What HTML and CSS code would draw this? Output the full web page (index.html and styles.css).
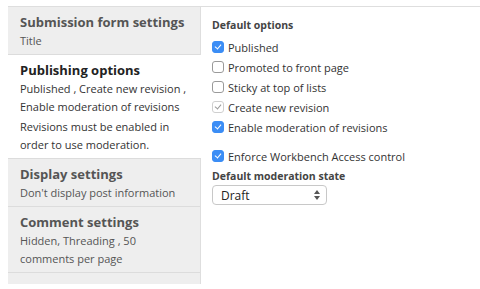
FILE: index.html
```html
<!DOCTYPE html>
<html lang="en">
<head>
  <meta charset="UTF-8">
  <meta name="viewport" content="width=device-width, initial-scale=1.0">
  <title>Publishing options</title>
  <link rel="stylesheet" href="styles.css">
</head>
<body>
  <div class="vtabs">
    <ul class="menu">
      <li class="tab">
        <div class="tab-title">Submission form settings</div>
        <div class="tab-summary">Title</div>
      </li>
      <li class="tab active">
        <div class="tab-title">Publishing options</div>
        <div class="tab-summary">Published , Create new revision , Enable moderation of revisions</div>
        <div class="tab-summary note">Revisions must be enabled in order to use moderation.</div>
      </li>
      <li class="tab">
        <div class="tab-title">Display settings</div>
        <div class="tab-summary">Don't display post information</div>
      </li>
      <li class="tab">
        <div class="tab-title">Comment settings</div>
        <div class="tab-summary">Hidden, Threading , 50 comments per page</div>
      </li>
    </ul>

    <div class="panel">
      <div class="label">Default options</div>
      <div class="options">
        <label class="check"><span class="box checked"></span>Published</label>
        <label class="check"><span class="box"></span>Promoted to front page</label>
        <label class="check"><span class="box"></span>Sticky at top of lists</label>
        <label class="check"><span class="box checked disabled"></span>Create new revision</label>
        <label class="check"><span class="box checked"></span>Enable moderation of revisions</label>
      </div>

      <label class="check enforce"><span class="box checked"></span>Enforce Workbench Access control</label>

      <div class="label state">Default moderation state</div>
      <div class="select">
        <span>Draft</span>
        <svg class="arrows" width="6" height="10" viewBox="0 0 6 10">
          <path d="M0 4 L3 0 L6 4 Z M0 6 L3 10 L6 6 Z" fill="#555"/>
        </svg>
      </div>
    </div>
  </div>
</body>
</html>
```

FILE: styles.css
```css
body {
  margin: 0;
  font-family: 'Open Sans', sans-serif;
  font-size: 11px;
  color: #333;
  background: #fff;
}

.vtabs {
  display: flex;
  margin: 6px 0 0 8px;
  height: 277px;
  border-top: 1px solid #dedede;
}

.menu {
  list-style: none;
  margin: 0;
  padding: 0;
  width: 192px;
  flex-shrink: 0;
  background: #eeeeee;
}

.tab {
  padding: 6px 12px 4px;
  border-bottom: 1px solid #dcdcdc;
}

.tab.active {
  background: #fff;
  margin-right: -1px;
  position: relative;
}

.tab-title {
  font-size: 13px;
  font-weight: bold;
  line-height: 18px;
  color: #555;
}

.active .tab-title {
  color: #222;
}

.tab-summary {
  margin-top: 1px;
  line-height: 18px;
  color: #555;
}

.active .tab-summary {
  color: #333;
}

.tab-summary.note {
  margin-top: 2px;
}

.panel {
  flex: 1;
  border-left: 1px solid #dedede;
  padding: 9px 11px;
}

.label {
  font-size: 10.5px;
  font-weight: bold;
  line-height: 18px;
  color: #444;
}

.label.state {
  margin-top: 1px;
}

.options {
  margin-top: 3px;
}

.check {
  display: flex;
  align-items: center;
  gap: 4px;
  height: 20px;
  color: #333;
}

.check.enforce {
  margin-top: 9px;
}

.box {
  width: 10px;
  height: 10px;
  border: 1px solid #9a9a9a;
  border-radius: 3px;
  background: #fff;
  flex-shrink: 0;
  position: relative;
}

.box.checked {
  background: #3b8df5;
  border-color: #3b8df5;
}

.box.checked::after {
  content: "";
  position: absolute;
  left: 3px;
  top: 1px;
  width: 3px;
  height: 5px;
  border: solid #fff;
  border-width: 0 1.5px 1.5px 0;
  transform: rotate(40deg);
}

.box.checked.disabled {
  background: #fff;
  border-color: #cfcfcf;
}

.box.checked.disabled::after {
  border-color: #999;
}

.select {
  height: 18px;
  width: 99px;
  border: 1px solid #c8c8c8;
  border-radius: 4px;
  display: flex;
  align-items: center;
  justify-content: space-between;
  padding: 0 6px 0 8px;
  font-size: 12px;
  color: #222;
}
```
